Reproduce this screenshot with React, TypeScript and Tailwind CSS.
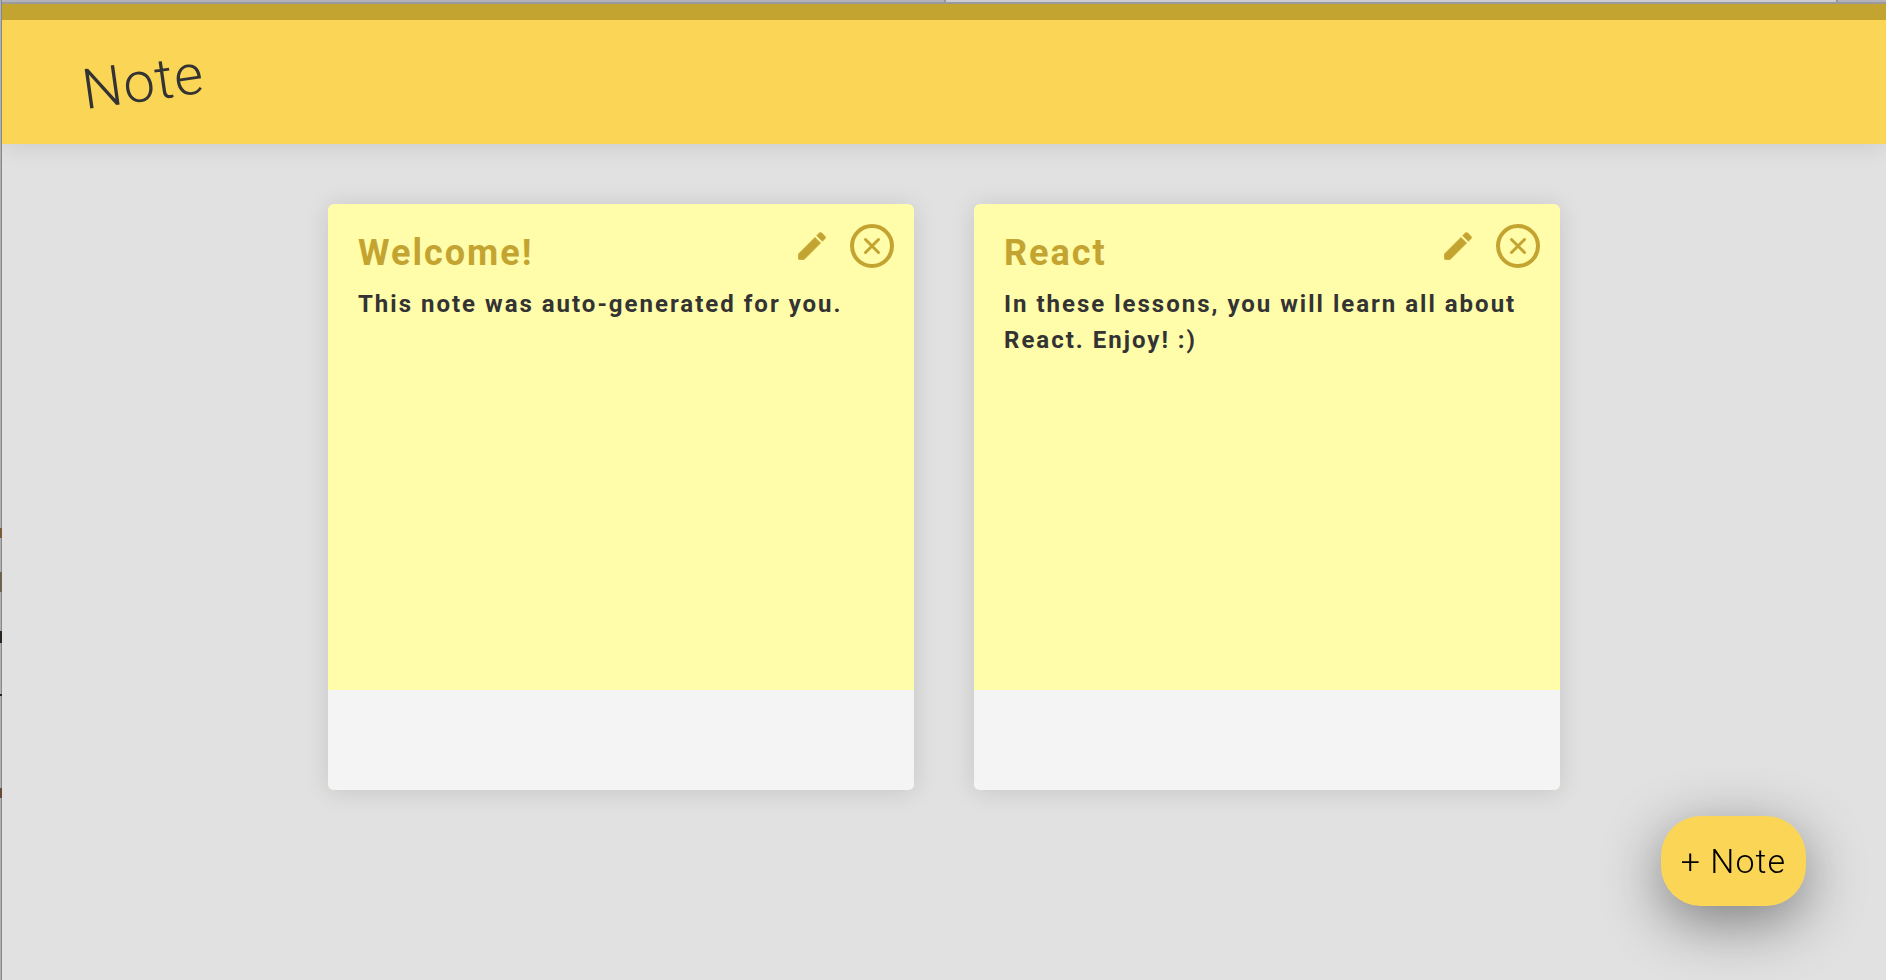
type Note = { title: string; text: string };

const notes: Note[] = [
  { title: "Welcome!", text: "This note was auto-generated for you." },
  { title: "React", text: "In these lessons, you will learn all about React. Enjoy! :)" },
];

function PencilIcon() {
  return (
    <svg viewBox="0 0 24 24" className="size-9" fill="currentColor" stroke="currentColor" strokeWidth="0.5" strokeLinejoin="round" aria-hidden="true">
      <path d="M3 17.3v3.2c0 .28.22.5.5.5h3.2l11-11-3.7-3.7z" />
      <path d="M20.6 7.2c.5-.5.5-1.2 0-1.7l-2.1-2.1c-.5-.5-1.2-.5-1.7 0l-1.6 1.7 3.7 3.7z" />
    </svg>
  );
}

function CloseIcon() {
  return (
    <svg viewBox="0 0 18 18" className="size-[18px]" fill="none" stroke="currentColor" strokeWidth="3" strokeLinecap="round" aria-hidden="true">
      <path d="M2.5 2.5l13 13M15.5 2.5l-13 13" />
    </svg>
  );
}

function NoteCard({ note }: { note: Note }) {
  return (
    <article className="flex aspect-square flex-1 flex-col overflow-hidden rounded-md bg-[#fffcaa] shadow-[0_2px_24px_rgba(0,0,0,0.12)]">
      <div className="relative flex-1 px-[30px] pt-6">
        <h2 className="text-4xl leading-[50px] font-bold tracking-[2px] text-[#c4a431]">{note.title}</h2>
        <p className="mt-2 text-2xl leading-9 font-bold tracking-[2px] text-[#333333]">{note.text}</p>
        <div className="absolute top-5 right-5 flex items-center gap-5 text-[#c4a431]">
          <button type="button" aria-label={`Edit ${note.title}`}>
            <PencilIcon />
          </button>
          <button
            type="button"
            aria-label={`Delete ${note.title}`}
            className="flex size-11 items-center justify-center rounded-full border-4 border-[#c4a431]"
          >
            <CloseIcon />
          </button>
        </div>
      </div>
      <div className="h-[100px] bg-[#f4f4f4]" />
    </article>
  );
}

function WindowTop() {
  return (
    <div className="border-b-2 border-[#a09fa5]">
      <div className="flex h-0.5 bg-[#b9b8be]">
        <div className="w-1/2" />
        <div className="mr-12 flex-1 border-x-2 border-[#9b9a9f] bg-[#d5d4d8]" />
      </div>
    </div>
  );
}

function WindowEdge() {
  return (
    <div className="relative w-0.5 border-r border-[#88888b] bg-[#b0b1b6]">
      <i className="absolute top-[528px] left-0 h-2.5 w-0.5 bg-[#7a5c3a]" />
      <i className="absolute top-[572px] left-0 h-5 w-0.5 bg-[#6d6350]" />
      <i className="absolute top-[631px] left-0 h-3 w-0.5 bg-[#2b2522]" />
      <i className="absolute top-[694px] left-0 h-0.5 w-0.5 bg-[#222222]" />
      <i className="absolute top-[788px] left-0 h-2.5 w-0.5 bg-[#6a4a38]" />
    </div>
  );
}

export default function App() {
  return (
    <div className="flex min-h-screen bg-[#e1e1e1] font-[Roboto,sans-serif]">
      <WindowEdge />
      <div className="flex flex-1 flex-col">
        <WindowTop />
        <header className="flex h-[140px] items-center border-t-16 border-[#c4a431] bg-[#fbd556] px-20 shadow-[0_2px_24px_rgba(0,0,0,0.1)]">
          <h1 className="-rotate-8 text-[56px] leading-16 font-light tracking-[1px] text-[#333333]">Note</h1>
        </header>
        <main className="mx-auto flex w-full max-w-[1232px] gap-[60px] pt-[60px]">
          {notes.map((note) => (
            <NoteCard key={note.title} note={note} />
          ))}
        </main>
        <button
          type="button"
          className="fixed right-20 bottom-[74px] h-[90px] rounded-[40px] bg-[#fbd556] px-5 text-[34px] font-light tracking-[1px] text-black shadow-[0_16px_60px_rgba(0,0,0,0.45)]"
        >
          + Note
        </button>
      </div>
    </div>
  );
}
